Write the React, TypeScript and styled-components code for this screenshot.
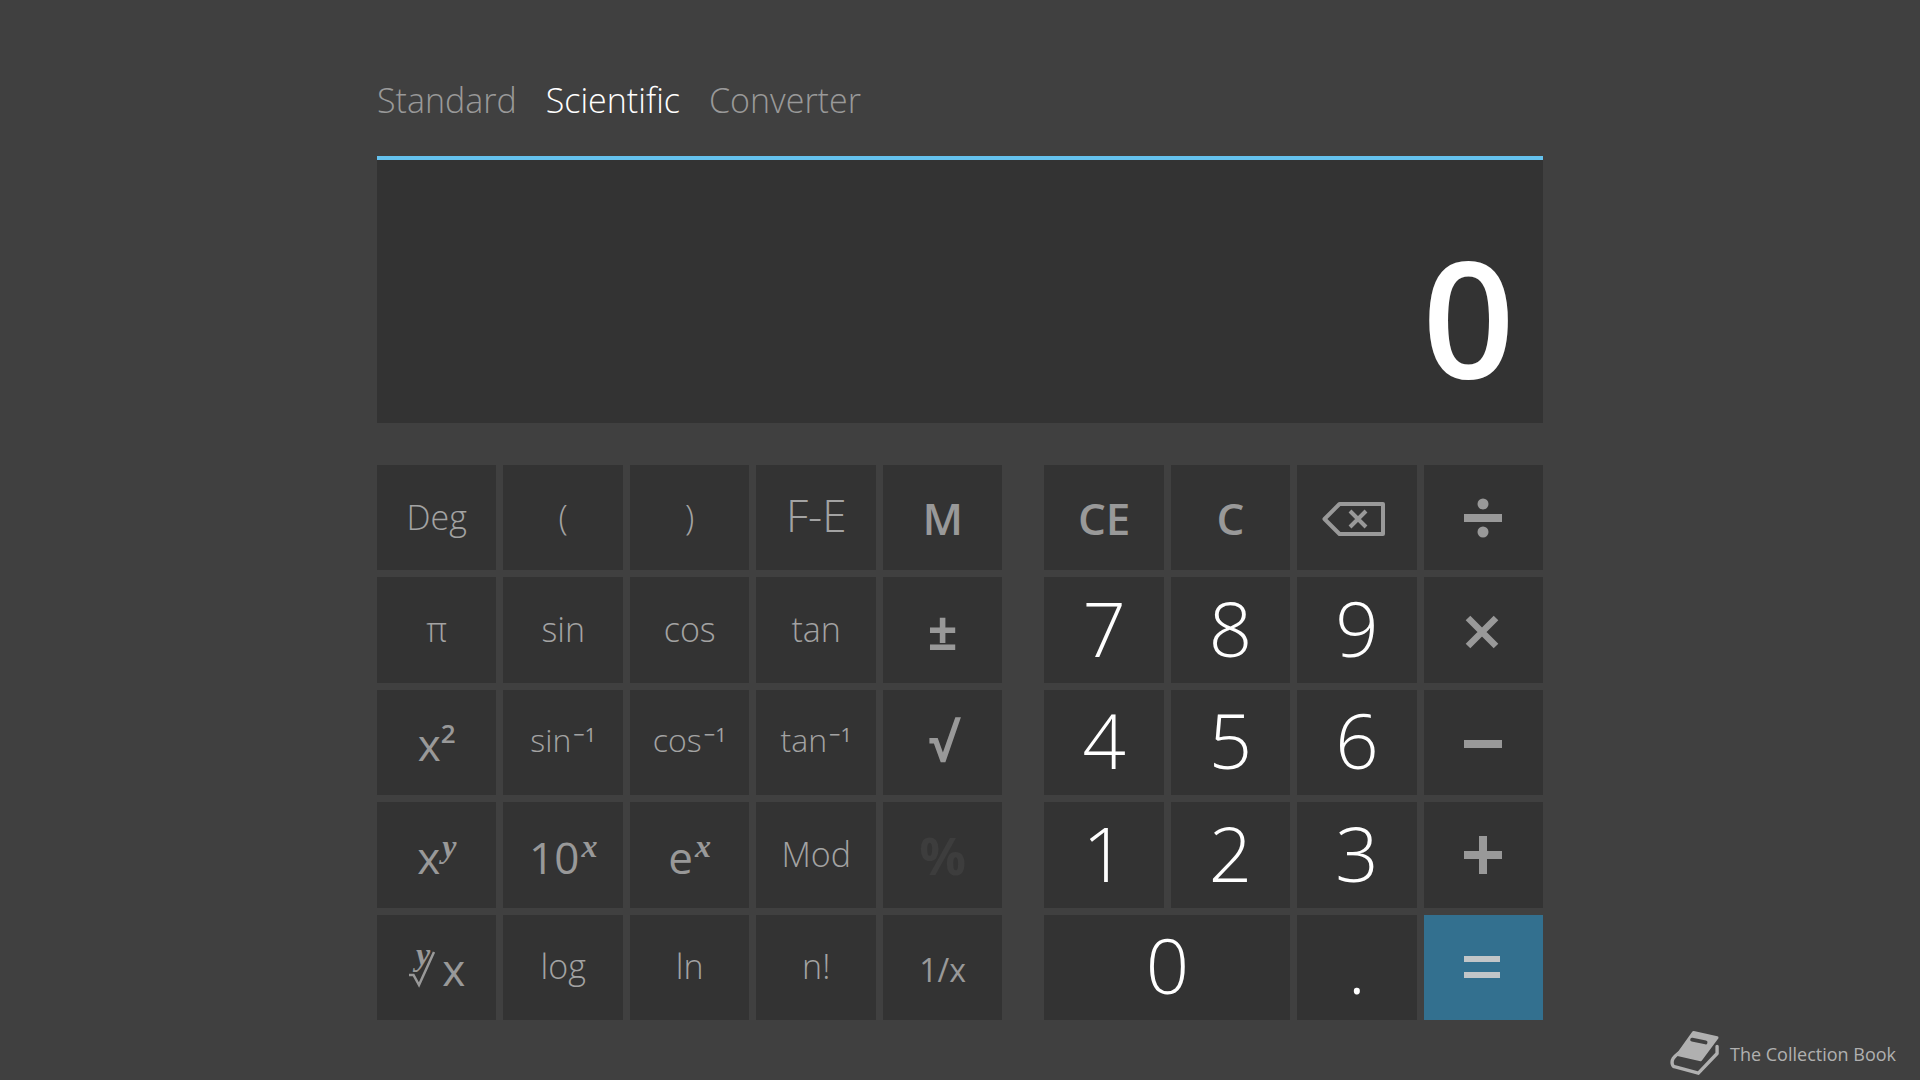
import React, { useState } from "react";
import styled, { createGlobalStyle, css } from "styled-components";

const GlobalStyle = createGlobalStyle`
  *, *::before, *::after { box-sizing: border-box; }
  body {
    margin: 0;
    background: #404040;
    color: #999999;
    font-family: "Open Sans", "Noto Sans", sans-serif;
  }
`;

const Page = styled.div`
  min-height: 100vh;
  display: flex;
  flex-direction: column;
`;

const Calculator = styled.main`
  flex: 1;
  width: 100%;
  max-width: 1166px;
  margin: 0 auto;
  display: flex;
  flex-direction: column;
`;

const Modes = styled.nav`
  display: flex;
  align-items: center;
  gap: 29px;
  padding: 76px 0 32px;
`;

const Mode = styled.button<{ $active: boolean }>`
  border: 0;
  padding: 0;
  background: none;
  font-family: inherit;
  font-size: 34px;
  font-weight: 300;
  line-height: 48px;
  cursor: pointer;
  color: ${(p) => (p.$active ? "#ffffff" : "#999999")};
`;

const Display = styled.output`
  display: flex;
  align-items: flex-end;
  justify-content: flex-end;
  min-height: 267px;
  padding: 0 28px 8px;
  border-top: 4px solid #65c2ee;
  background: #333333;
  color: #ffffff;
  font-size: 162px;
  font-weight: 600;
  line-height: 200px;
`;

const Pads = styled.div`
  flex: 1;
  display: grid;
  grid-template-columns: 626fr 499fr;
  gap: 42px;
  margin-top: 42px;
`;

const Pad = styled.div<{ $columns: number }>`
  display: grid;
  grid-template-columns: repeat(${(p) => p.$columns}, minmax(0, 1fr));
  grid-template-rows: repeat(5, minmax(0, 1fr));
  gap: 7px;
`;

type Kind = "word" | "fraction" | "power" | "plain" | "strong" | "symbol" | "digit" | "math";

const kinds = {
  word: css`
    font-size: 34px;
    font-weight: 300;
    padding-bottom: 2px;
    color: #a3a3a3;
  `,
  fraction: css`
    font-size: 32px;
    font-weight: 400;
    padding-top: 6px;
  `,
  power: css`
    font-size: 32px;
    font-weight: 300;
    padding-bottom: 4px;
    color: #a3a3a3;
  `,
  plain: css`
    font-size: 44px;
    font-weight: 300;
    padding-bottom: 6px;
    color: #a3a3a3;
  `,
  strong: css`
    font-size: 44px;
    font-weight: 600;
  `,
  symbol: css`
    font-size: 52px;
    font-weight: 700;
  `,
  digit: css`
    font-size: 76px;
    font-weight: 300;
    padding-bottom: 4px;
    color: #ffffff;
  `,
  math: css`
    font-size: 44px;
    font-weight: 400;
    padding-top: 4px;
  `,
};

const Key = styled.button<{ $kind: Kind; $wide?: boolean; $accent?: boolean }>`
  display: flex;
  align-items: center;
  justify-content: center;
  border: 0;
  padding: 0;
  font-family: inherit;
  line-height: 1;
  cursor: pointer;
  background: ${(p) => (p.$accent ? "#33708f" : "#333333")};
  color: ${(p) => (p.$accent ? "#c2c6c8" : "#999999")};
  grid-column: ${(p) => (p.$wide ? "span 2" : "auto")};
  ${(p) => kinds[p.$kind]}

  &:disabled {
    color: #3d3d3d;
    cursor: default;
  }
`;

const Power = styled.span`
  display: flex;
  align-items: flex-start;
`;

const Inverse = styled.sup`
  padding-left: 2px;
  font-size: 20px;
  font-weight: 400;
  line-height: 22px;
`;

const Square = styled.sup`
  font-size: 26px;
  font-weight: 600;
  line-height: 22px;
`;

const Variable = styled.sup`
  padding-left: 2px;
  font-family: "Liberation Serif", serif;
  font-style: italic;
  font-weight: 700;
  font-size: 32px;
  line-height: 22px;
`;

const RootSign = styled.span`
  display: grid;
  height: 52px;
  margin-right: 6px;

  & > * {
    grid-area: 1 / 1;
  }
`;

const Glyph = styled.svg`
  display: block;
  fill: currentColor;
`;

const Footer = styled.footer`
  height: 60px;
  display: flex;
  align-items: center;
  justify-content: flex-end;
  gap: 10px;
  padding: 8px 24px 0;
  color: #b0b0b0;
  font-size: 18px;
`;

const operators: Record<string, React.ReactNode> = {
  divide: (
    <>
      <rect y="17" width="38" height="8" />
      <circle cx="19" cy="7" r="5.5" />
      <circle cx="19" cy="35" r="5.5" />
    </>
  ),
  multiply: <path d="M4 7 32 35M32 7 4 35" stroke="currentColor" strokeWidth="6.5" />,
  subtract: <rect y="17" width="38" height="8" />,
  add: <path d="M15 2h8v15h15v8H23v15h-8V25H0v-8h15Z" />,
  equals: <path d="M0 10h36v6H0zM0 26h36v6H0z" />,
};

function Operator({ name }: { name: string }) {
  return (
    <Glyph width="38" height="42" viewBox="0 0 38 42" aria-hidden="true">
      {operators[name]}
    </Glyph>
  );
}

function Backspace() {
  return (
    <Glyph width="70" height="40" viewBox="0 0 70 40" aria-hidden="true">
      <path
        d="M2.5 21 17.5 6H61V36H17.5Z"
        fill="none"
        stroke="currentColor"
        strokeWidth="4"
        strokeLinejoin="round"
      />
      <path d="m28 13 16 16m0-16-16 16" fill="none" stroke="currentColor" strokeWidth="4" />
    </Glyph>
  );
}

function Book() {
  return (
    <Glyph width="50" height="48" viewBox="0 0 52 50" aria-hidden="true">
      <path
        d="M24.500 2.500 49 8 32 31 8 25.500Z"
        stroke="currentColor"
        strokeWidth="3"
        strokeLinejoin="round"
      />
      <path
        d="M9 24C4 28 1 31 2.500 36Q3 38 5.500 38.500L29.500 45 49 24.500V17"
        fill="none"
        stroke="currentColor"
        strokeWidth="3.500"
        strokeLinecap="round"
        strokeLinejoin="round"
      />
      <path d="M23 10 37 13" stroke="#404040" strokeWidth="4" strokeLinecap="round" />
    </Glyph>
  );
}

type KeySpec = {
  name: string;
  kind: Kind;
  label?: React.ReactNode;
  wide?: boolean;
  accent?: boolean;
  disabled?: boolean;
};

const inverse = (name: string) => (
  <Power>
    {name}
    <Inverse>−1</Inverse>
  </Power>
);

const raised = (base: string, exponent: string) => (
  <Power>
    {base}
    <Variable>{exponent}</Variable>
  </Power>
);

const scientificKeys: KeySpec[] = [
  { name: "Deg", kind: "word" },
  { name: "(", kind: "word" },
  { name: ")", kind: "word" },
  { name: "F-E", kind: "plain" },
  { name: "M", kind: "strong" },
  { name: "π", kind: "word" },
  { name: "sin", kind: "word" },
  { name: "cos", kind: "word" },
  { name: "tan", kind: "word" },
  { name: "±", kind: "symbol" },
  { name: "x squared", kind: "math", label: <Power>x<Square>2</Square></Power> },
  { name: "inverse sine", kind: "power", label: inverse("sin") },
  { name: "inverse cosine", kind: "power", label: inverse("cos") },
  { name: "inverse tangent", kind: "power", label: inverse("tan") },
  { name: "√", kind: "symbol" },
  { name: "x to the y", kind: "math", label: raised("x", "y") },
  { name: "10 to the x", kind: "math", label: raised("10", "x") },
  { name: "e to the x", kind: "math", label: raised("e", "x") },
  { name: "Mod", kind: "word" },
  { name: "%", kind: "symbol", disabled: true },
  {
    name: "y root of x",
    kind: "math",
    label: (
      <>
        <RootSign>
          <Variable>y</Variable>
          <Glyph width="28" height="52" viewBox="0 0 28 52" aria-hidden="true">
            <path d="M1 32h4.500l5.500 10L26 9" fill="none" stroke="currentColor" strokeWidth="2.500" />
          </Glyph>
        </RootSign>
        x
      </>
    ),
  },
  { name: "log", kind: "word" },
  { name: "ln", kind: "word" },
  { name: "n!", kind: "word" },
  { name: "1/x", kind: "fraction" },
];

const numberKeys: KeySpec[] = [
  { name: "CE", kind: "strong" },
  { name: "C", kind: "strong" },
  { name: "Backspace", kind: "strong", label: <Backspace /> },
  { name: "Divide", kind: "strong", label: <Operator name="divide" /> },
  { name: "7", kind: "digit" },
  { name: "8", kind: "digit" },
  { name: "9", kind: "digit" },
  { name: "Multiply", kind: "math", label: <Operator name="multiply" /> },
  { name: "4", kind: "digit" },
  { name: "5", kind: "digit" },
  { name: "6", kind: "digit" },
  { name: "Subtract", kind: "math", label: <Operator name="subtract" /> },
  { name: "1", kind: "digit" },
  { name: "2", kind: "digit" },
  { name: "3", kind: "digit" },
  { name: "Add", kind: "strong", label: <Operator name="add" /> },
  { name: "0", kind: "digit", wide: true },
  { name: ".", kind: "digit" },
  { name: "Equals", kind: "strong", label: <Operator name="equals" />, accent: true },
];

function Keys({ keys }: { keys: KeySpec[] }) {
  return keys.map((k) => (
    <Key
      key={k.name}
      type="button"
      aria-label={k.label ? k.name : undefined}
      $kind={k.kind}
      $wide={k.wide}
      $accent={k.accent}
      disabled={k.disabled}
    >
      {k.label ?? k.name}
    </Key>
  ));
}

export default function App() {
  const [mode, setMode] = useState("Scientific");
  return (
    <Page>
      <GlobalStyle />
      <Calculator>
        <Modes>
          {["Standard", "Scientific", "Converter"].map((m) => (
            <Mode key={m} type="button" $active={m === mode} onClick={() => setMode(m)}>
              {m}
            </Mode>
          ))}
        </Modes>
        <Display>0</Display>
        <Pads>
          <Pad $columns={5}>
            <Keys keys={scientificKeys} />
          </Pad>
          <Pad $columns={4}>
            <Keys keys={numberKeys} />
          </Pad>
        </Pads>
      </Calculator>
      <Footer>
        <Book />
        The Collection Book
      </Footer>
    </Page>
  );
}
